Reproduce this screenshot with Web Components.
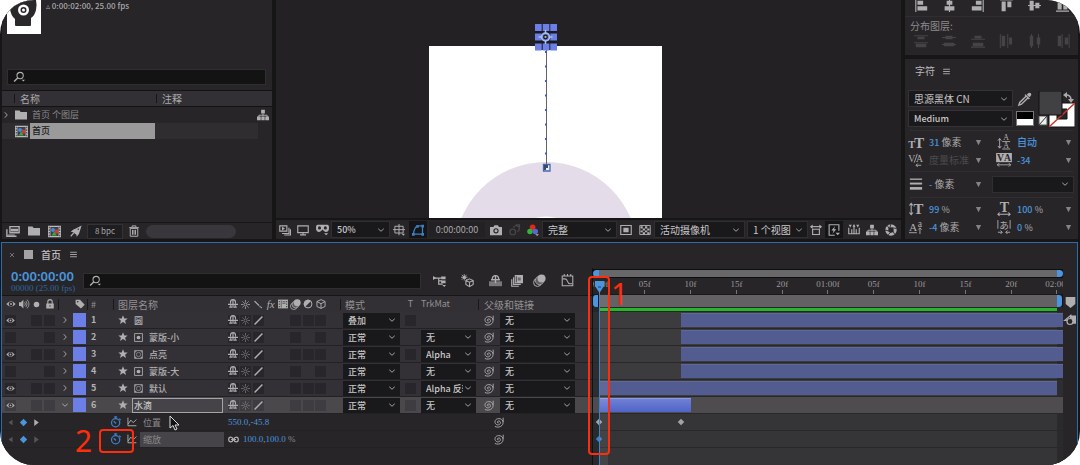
<!DOCTYPE html>
<html lang="zh-CN">
<head>
<meta charset="utf-8">
<title>首页 - 合成</title>
<style>
  html, body { margin: 0; background: #fff; }
  body {
    font-family: "Noto Sans CJK SC", "Noto Sans", sans-serif;
    font-size: 10px; line-height: 16px; color: #a9a8a9;
    --panel: #272528; --field: #19181a; --head: #323034;
    --blue: #4a95dd; --icon: #b0afb0;
  }
</style>
</head>
<body>
<ae-app></ae-app>
<script>
const ICONS = {
  search: '<circle cx="9.5" cy="6" r="4.2" fill="none" stroke="currentColor" stroke-width="1.4"/><path d="M6.5 9 1.5 14" stroke="currentColor" stroke-width="1.8"/><path d="M11.5 11.5h4.500l-2.200 2.600z" fill="currentColor"/>',
  right: '<path d="m5.500 2.500 5 5.500-5 5.500" fill="none" stroke="currentColor" stroke-width="1.8"/>',
  down: '<path d="m2.500 5.500 5.500 5 5.500-5" fill="none" stroke="currentColor" stroke-width="1.8"/>',
  folder: '<path d="M0 2h6l1.500 2H16V14H0z" fill="currentColor"/>',
  comp: '<path d="M0 1h16v14H0z" fill="#bbb"/><path d="M3 2.500h10v11H3z" fill="#38424d"/><path d="M1 2h1v2H1zm0 3.300h1v2H1zm0 3.300h1v2H1zm0 3.300h1v2H1zM14 2h1v2h-1zm0 3.300h1v2h-1zm0 3.300h1v2h-1zm0 3.300h1v2h-1z" fill="#222"/><circle cx="6.200" cy="6.200" r="2.400" fill="#478ad8"/><path d="M8.500 5.500h4v5h-4z" fill="#d23b2e"/><path d="m7.500 8 3.300 5H4.500z" fill="#3fa63e"/>',
  tree: '<path d="M5.500 1h5v5h-5zM0 10h5v5H0zm11 0h5v5h-5zM5.800 10h4.400v5H5.800z" fill="currentColor"/><path d="M8 6v3M2.500 11V8.300h11V11" fill="none" stroke="currentColor" stroke-width="1.300"/>',
  stack: '<path d="M4.500 3H15v7H4.500zM1 6v8h11" fill="none" stroke="currentColor" stroke-width="1.600"/><path d="M5.500 5.500h8.500v3H5.500zM2 12h8v1H2z" fill="currentColor"/>',
  rocket: '<path d="M15.500.500 7 5 4.500 6 1 9l3 .500L8.500 13l.500 2.500 3-4z" fill="currentColor"/><path d="m1 15 4-4.500" stroke="currentColor" stroke-width="1.600"/><circle cx="11" cy="5.500" r="1" fill="#272528"/>',
  trash: '<path d="M3 4.500h10V15H3zM1.500 3.500h13M5.500 3V1.200h5V3M6 6.500v6.500M8 6.500v6.500M10 6.500v6.500" fill="none" stroke="currentColor" stroke-width="1.300"/>',
  menu: '<path d="M2 4h12M2 8h12M2 12h12" stroke="currentColor" stroke-width="1.600"/>',
  close: '<path d="m4 4 8 8m0-8-8 8" stroke="currentColor" stroke-width="1.600"/>',
  eye: '<path d="M.500 8Q8-.500 15.500 8 8 16 .500 8z" fill="currentColor"/><circle cx="8" cy="7.800" r="3.600" fill="#29272a"/><circle cx="8" cy="7.800" r="1.600" fill="currentColor"/>',
  speaker: '<path d="M0 5h3l4-4v14l-4-4H0z" fill="currentColor"/><path d="M9 5q2.500 3 0 6M11 3q4 5 0 10M13 1q6 7 0 14" fill="none" stroke="currentColor" stroke-width="1.200"/>',
  dot: '<circle cx="8" cy="8" r="4" fill="currentColor"/>',
  lock: '<path d="M2 7h12v8H2z" fill="currentColor"/><path d="M4.500 8V4.500a3.500 3.500 0 0 1 7 0V8" fill="none" stroke="currentColor" stroke-width="1.700"/><path d="M7.300 9.500h1.400v3H7.300z" fill="#323034"/>',
  tag: '<path d="M1 1h7l7.500 8-6 6L1 8z" fill="currentColor"/><circle cx="4.300" cy="4.300" r="1.300" fill="#323034"/>',
  star: '<path d="m8 .500 2.100 5h5.400l-4.200 3.500 1.600 5.500L8 11.200 3.100 14.500 4.700 9 .500 5.500h5.400z" fill="currentColor"/>',
  mask: '<path d="M1 1h14v14H1z" fill="none" stroke="currentColor" stroke-width="1.500"/><circle cx="8" cy="8" r="3.300" fill="currentColor"/>',
  matte: '<path d="M1 1h14v14H1z" fill="none" stroke="currentColor" stroke-width="1.300"/><circle cx="8" cy="8" r="3.800" fill="none" stroke="currentColor"/><path d="M2 2h3L2 5zM14 2h-3l3 3zM2 14v-3l3 3zM14 14h-3l3-3z" fill="currentColor"/>',
  shy: '<path d="M4 7V5q0-4 4-4t4 4v2M0 8.500h16M8 2v12M4.500 8.500V13M11.500 8.500V13M2 13h4.500M9.500 13H14" fill="none" stroke="currentColor" stroke-width="1.800"/>',
  sun: '<circle cx="8" cy="8" r="2.600" fill="none" stroke="currentColor" stroke-width="1.400"/><path d="M8 0v4M8 12v4M0 8h4M12 8h4M2.500 2.500l2.500 2.500M11 11l2.500 2.500M13.500 2.500 11 5M5 11l-2.500 2.500" stroke="currentColor" stroke-width="1.300"/>',
  slash: '<path d="M1 15 15 1" stroke="currentColor" stroke-width="2.600"/>',
  back: '<path d="m1 2 8 8" stroke="currentColor" stroke-width="2.200"/><path d="m10 11 4 3.500" stroke="currentColor" stroke-width="2.200" stroke-dasharray="2 1"/>',
  film: '<path d="M0 1h16v14H0z" fill="currentColor"/><path d="M1.200 3h1.600v2H1.200zm0 4h1.600v2H1.200zm0 4h1.600v2H1.200zM13.200 3h1.600v2h-1.600zm0 4h1.600v2h-1.600zm0 4h1.600v2h-1.600zM4.500 2.500h1v11h-1zM7 4h5v1H7zm0 3h5v1H7z" fill="#323034"/>',
  blur: '<circle cx="5.500" cy="10.500" r="4.800" fill="none" stroke="currentColor" stroke-width="1.200"/><circle cx="8" cy="8" r="5" fill="#5d5c5e" stroke="currentColor"/><circle cx="10.500" cy="5.500" r="5" fill="currentColor"/>',
  half: '<circle cx="8" cy="8" r="6.300" fill="none" stroke="currentColor" stroke-width="1.600"/><path d="M12.500 3.500a6.300 6.300 0 0 0-9 9z" fill="currentColor"/>',
  cube: '<path d="m8 1 6.500 3v8L8 15l-6.500-3V4zM1.500 4 8 7.500 14.500 4M8 7.500V15" fill="none" stroke="currentColor" stroke-width="1.500"/>',
  spiral: '<path d="M8.300 8.200c-.800 1.300-2.500.200-1.800-1.300.800-2 4-1.500 4.300.900.400 3.300-3.800 4.800-6.300 2.800C1 7.500 3.500 2.300 8.300 2.300c6 0 8.200 6 4.700 10-2.300 2.600-7 3.200-10.300 1.400M14.800 1v6" fill="none" stroke="currentColor" stroke-width="1.300"/>',
  watch: '<circle cx="7.500" cy="9" r="5.500" fill="none" stroke="currentColor" stroke-width="1.700"/><path d="M5.500 1.200h4M7.500 1v3M12 3.500l2.500 2M5 7l3 3" stroke="currentColor" stroke-width="1.700"/>',
  graph: '<path d="M1.500 1v13H15" fill="none" stroke="currentColor" stroke-width="1.500"/><path d="m2 11 4-6 4 4 5-5" fill="none" stroke="currentColor" stroke-width="1.500"/>',
  link: '<path d="M7.500 8c-1 4.500-6.500 4.500-6.500 0s5.500-4.500 6.500 0m1 0c1-4.500 6.500-4.500 6.500 0s-5.500 4.500-6.500 0M4.500 8h7" fill="none" stroke="currentColor" stroke-width="1.800"/>',
  prev: '<path d="M11.500 3v10L4.500 8z" fill="currentColor"/>',
  next: '<path d="M4 2v12l8-6z" fill="currentColor"/>',
  key: '<path d="m8 1.500 6.500 6.500L8 14.500 1.500 8z" fill="currentColor"/>',
  drop: '<path d="M2 2.500h12L8 14z" fill="currentColor"/>',
  screens: '<path d="M1 2.500h9.500v7H1z" fill="none" stroke="currentColor" stroke-width="1.500"/><path d="m4 3.500 4 2.500-4 2.500zM12.500 5v7H4v1.300h10V5zM14.500 7v7H7v1.300h9V7z" fill="currentColor"/>',
  monitor: '<path d="M1 2.500h14v9H1zM8 12v2.500M4 14.500h8" fill="none" stroke="currentColor" stroke-width="1.500"/>',
  goggles: '<path d="M2 2h12q2 0 2 4 0 5-4 5-2 0-4-3-2 3-4 3-4 0-4-5 0-4 2-4z" fill="currentColor"/><circle cx="4.300" cy="6" r="1.900" fill="#272528"/><circle cx="11.500" cy="6" r="1.900" fill="#272528"/><path d="M10 12.500h5L12.500 15z" fill="currentColor"/>',
  guides: '<path d="M2.500 3h11v9h-11zM8 0v15M0 7.500h16" fill="none" stroke="currentColor" stroke-width="1.300"/><path d="M11.500 13h4.500l-2.200 2.500z" fill="currentColor"/>',
  roi: '<path d="M2 13.500h12V2.500H8Q3 3.500 2 13.500z" fill="none" stroke="currentColor" stroke-width="1.700"/><path d="M0 12h3.500v3.500H0zM12.500 12H16v3.500h-3.500zM12.500 1H16v3.500h-3.500zM5.500 1.500H9V5H5.500z" fill="currentColor"/>',
  camera: '<path d="M0 4h4.500L6 1.500h4.500L12 4h4v11H0z" fill="currentColor"/><circle cx="8" cy="9" r="3.500" fill="#272528"/><circle cx="8" cy="9" r="2" fill="currentColor"/>',
  ghost: '<circle cx="5" cy="10.500" r="3.800" fill="none" stroke="currentColor" stroke-width="1.600"/><path d="M6 5a4 4 0 1 1 5 5M9 1h5v4" fill="none" stroke="currentColor" stroke-width="1.600"/>',
  rgb: '<circle cx="7.500" cy="4.200" r="3.700" fill="#e8271b"/><circle cx="4" cy="10" r="3.700" fill="#2eb53a"/><circle cx="11" cy="10" r="3.700" fill="#5668cf"/><path d="M11 13.500h5l-2.500 2.500z" fill="currentColor"/>',
  inset: '<path d="M1 2h14v12H1z" fill="none" stroke="currentColor" stroke-width="1.500"/><path d="M4.500 5h7v6h-7z" fill="currentColor"/>',
  checker: '<path d="M1 2h14v12H1z" fill="none" stroke="currentColor" stroke-width="1.200"/><path d="M2 3h3v3H2zm6 0h3v3H8zM5 6h3v2.500H5zm6 0h3v2.500h-3zM2 8.500h3V11H2zm6 0h3V11H8zM5 11h3v2.500H5zm6 0h3v2.500h-3z" fill="currentColor"/>',
  aspect: '<path d="M3.500 7h9v7h-9z" fill="none" stroke="currentColor" stroke-width="1.500"/><path d="M1 3.500h14" stroke="currentColor" stroke-width="1.500"/><path d="M3.500.500v6L0 3.500zM12.500.500v6l3.500-3z" fill="currentColor"/>',
  fast: '<path d="M14.500 9V1h-13v14H9" fill="none" stroke="currentColor" stroke-width="1.500"/><path d="M9.500 2.500 4.500 8.500h3L6 13l5-6H8zM10 11.500h6L13 15z" fill="currentColor"/>',
  ruler: '<path d="M1 5v8h14V5M5 13V7M8 13V2M11 13V7" fill="none" stroke="currentColor" stroke-width="1.500"/><path d="M1 1h4L3 4.500zM11 1h4l-2 3.500zM6 3.500h4L8 0z" fill="currentColor"/>',
  shutter: '<circle cx="8" cy="8" r="5.600" fill="none" stroke="currentColor" stroke-width="4"/><path d="m8 0-2 6M15.500 6l-6-1M13 14l-3-5.500M4 14.500l4-4M0 8l6 1.500M3 2l3 5" stroke="#272528" stroke-width="1.200"/>',
  flow: '<path d="M0 5h10M7 5v7.500h5M7 8.500h4" fill="none" stroke="currentColor" stroke-width="1.400"/><path d="M0 2.500 4 5 0 7.500zM10 3h5.500v3.500H10zM10 8h5.500v3.500H10zM11.500 13.500h4.500l-2.200 2.500z" fill="currentColor"/>',
  draft: '<path d="m10.500 6 4.500 2v5l-4.500 2.500L6 13V8zM6 8l4.500 2L15 8M10.500 10v5" fill="none" stroke="currentColor" stroke-width="1.300"/><circle cx="4" cy="4" r="2" fill="currentColor"/><path d="M4 0v8M0 4h8M1 1l6 6M7 1 1 7" stroke="currentColor"/>',
  hide: '<path d="M4 7q0-5 4-5t4 5M2.500 7h11M8 2v9" fill="none" stroke="currentColor" stroke-width="1.700"/><path d="M0 9h16v6H0z" fill="currentColor" opacity=".6"/>',
  blend: '<path d="M5 0h11v11H5z" fill="currentColor"/><path d="M3.500 3v9.500H13M1 5.500V15h9.500" fill="none" stroke="currentColor" stroke-width="1.600"/><path d="M6.500 1.500h1v8h-1zM9 3.500h4v1H9zM9 6h4v1H9z" fill="#272528"/>',
  curve: '<path d="M1.500 2.500h13v12h-13zM4 0v3M8 0v3M12 0v3" fill="none" stroke="currentColor" stroke-width="1.300"/><path d="M2 6h3q2 0 3 3t3 3h3" fill="none" stroke="currentColor" stroke-width="1.300"/>',
  dropper: '<path d="m10 3 1.500-1.500q2-1.500 3.200 0t-.200 3L13 6z" fill="currentColor"/><path d="m8 3 5 5M9.500 4.500 2 12l-1 3 3-1 7.500-7.500" fill="none" stroke="currentColor" stroke-width="1.600"/>',
  strokes: '<path d="M1 2.500h14" stroke="currentColor" stroke-width="1.500"/><path d="M1 7.500h14" stroke="currentColor" stroke-width="2.200"/><path d="M1 13h14" stroke="currentColor" stroke-width="3"/>',
  size: '<text x="-1" y="15" font-size="12" font-weight="700">T</text><text x="6" y="15" font-size="17" font-weight="700">T</text>',
  leading: '<text x="7" y="6" font-size="9">A</text><text x="7" y="15" font-size="9">A</text><path d="M6 7.500h9M6 16h9M3 4v11M1 6.500l2-2.500 2 2.500M1 12.500l2 2.500 2-2.500" fill="none" stroke="currentColor"/>',
  kern: '<text x="-1" y="10" font-size="11">V</text><text x="8" y="10" font-size="11">A</text><path d="M9.500 1 6 11M8 14h6M10 12l-2 2 2 2" fill="none" stroke="currentColor"/>',
  track: '<path d="M-1 0h18v10.500H-1z" fill="currentColor"/><text x="0" y="9" font-size="11" font-weight="700" style="fill:#272528">V</text><text x="8" y="9" font-size="11" font-weight="700" style="fill:#272528">A</text><path d="M0 13.500h16M2.500 11.500l-2 2 2 2M13.500 11.500l2 2-2 2" fill="none" stroke="currentColor"/>',
  vscale: '<text x="5" y="14" font-size="17" font-weight="700">T</text><path d="M2.500 2v12M.500 4l2-2.500 2 2.500M.500 12l2 2.500 2-2.500" fill="none" stroke="currentColor" stroke-width="1.200"/>',
  hscale: '<text x="3" y="11.500" font-size="16" font-weight="700">T</text><path d="M1 14h14M3 12l-2 2 2 2M13 12l2 2-2 2" fill="none" stroke="currentColor" stroke-width="1.200"/>',
  shift: '<text x="0" y="12" font-size="13">A</text><text x="10" y="8" font-size="11">a</text><path d="M0 14.500h9M12.500 9v7M10.500 11l2-2 2 2" fill="none" stroke="currentColor"/>',
  tsume: '<text x="2.500" y="10" font-size="11" style="font-family:Noto Sans CJK JP">あ</text><path d="M1 0v10M15 0v10M1 14h5M4 12l2 2-2 2M15 14h-5M12 12l-2 2 2 2" fill="none" stroke="currentColor"/>',
  alL: '<path d="M1 0v16" stroke="currentColor" stroke-width="1.400"/><path d="M3 2h7v5H3zM3 9h12v5H3z" fill="currentColor"/>',
  alC: '<path d="M8 0v16" stroke="currentColor" stroke-width="1.400"/><path d="M4.500 2h7v5h-7zM2 9h12v5H2z" fill="currentColor"/>',
  alR: '<path d="M15 0v16" stroke="currentColor" stroke-width="1.400"/><path d="M6 2h7v5H6zM1 9h12v5H1z" fill="currentColor"/>',
  alT: '<path d="M0 1h16" stroke="currentColor" stroke-width="1.400"/><path d="M2 3h5v12H2zM9 3h5v7H9z" fill="currentColor"/>',
  alM: '<path d="M0 8h16" stroke="currentColor" stroke-width="1.400"/><path d="M2 2h5v12H2zM9 4.500h5v7H9z" fill="currentColor"/>',
  alB: '<path d="M0 15h16" stroke="currentColor" stroke-width="1.400"/><path d="M2 1h5v12H2zM9 6h5v7H9z" fill="currentColor"/>',
  diT: '<path d="M0 2h16M0 10h16" stroke="currentColor" stroke-width="1.200"/><path d="M4 3h8v3H4zM2 11h12v4H2z" fill="currentColor"/>',
  diC: '<path d="M0 4h16M0 12h16" stroke="currentColor" stroke-width="1.200"/><path d="M4 2h8v4H4zM2 10h12v4H2z" fill="currentColor"/>',
  diB: '<path d="M0 6h16M0 15h16" stroke="currentColor" stroke-width="1.200"/><path d="M4 2h8v3H4zM2 10h12v4H2z" fill="currentColor"/>',
  diL: '<path d="M1.500 0v16M10 0v16" stroke="currentColor" stroke-width="1.200"/><path d="M3 2h4v12H3zM11.500 4h3.500v8h-3.500z" fill="currentColor"/>',
  diM: '<path d="M4 0v16M12 0v16" stroke="currentColor" stroke-width="1.200"/><path d="M2 2h4v12H2zM10 4h4v8h-4z" fill="currentColor"/>',
  diR: '<path d="M7 0v16M15 0v16" stroke="currentColor" stroke-width="1.200"/><path d="M2 2h4v12H2zM10 4h4v8h-4z" fill="currentColor"/>',
  marker: '<path d="M1 0h14v10l-7 6-7-6z" fill="currentColor"/>',
  bin: '<path d="M8 2h8v11H8z" fill="currentColor"/><path d="M10 1 1 8.500h5" fill="none" stroke="currentColor" stroke-width="1.600"/><circle cx="8" cy="10" r="4" fill="#272528" stroke="currentColor" stroke-width="1.600"/>'
};

const define = (name, css, html) => customElements.define(name, class extends HTMLElement {
  connectedCallback() {
    if (this.shadowRoot) return;
    const root = this.attachShadow({ mode: 'open' });
    root.innerHTML = `<style>*{box-sizing:border-box}button{font:inherit;color:inherit;background:none;border:0;padding:0;margin:0;display:grid;place-items:center}${css}</style>` +
      (typeof html === 'function' ? html(this) : html);
  }
});
const ic = (n, s = 12, c = '') => `<ae-icon name="${n}" style="--s:${s}px${c ? ';color:' + c : ''}"></ae-icon>`;
const btn = (n, label, s = 12, cls = '', c = '') => `<button class="${cls}" aria-label="${label}">${ic(n, s, c)}</button>`;

define('ae-icon', `
  :host { display: inline-grid; width: var(--s); height: var(--s); flex: none; color: var(--icon); }
  svg { width: 100%; height: 100%; overflow: visible; display: block; }
  text { font-family: "Liberation Serif", serif; fill: currentColor; }`,
  el => `<svg viewBox="0 0 16 16" aria-hidden="true" style="color:${el.style.color || 'var(--icon)'}">${ICONS[el.getAttribute('name')]}</svg>`);

define('ae-select', `
  :host { display: grid; height: 15px; background: var(--field); color: #c8c7c8; min-width: 0; }
  select { grid-area: 1/1; appearance: none; border: 0; background: none; color: inherit; font: inherit; line-height: 15px;
    height: 15px; width: 100%; min-width: 0; padding: 0 13px 0 5px; margin: 0; outline: 0; }
  ae-icon { grid-area: 1/1; place-self: center end; margin-right: 4px; pointer-events: none; }`,
  el => `<select aria-label="${el.getAttribute('label')}"><option>${el.getAttribute('value')}</option></select>${ic('down', 8)}`);

define('ae-search', `
  :host { display: grid; height: 16px; background: #141314; border: 1px solid #302e31; }
  input { grid-area: 1/1; border: 0; background: none; color: #bbb; font: inherit; height: 14px; width: 100%; min-width: 0; padding: 0 4px 0 22px; outline: 0; }
  ae-icon { grid-area: 1/1; place-self: center start; margin-left: 5px; }`,
  el => `<input type="text" aria-label="${el.getAttribute('label')}">${ic('search', 12)}`);

/* Project panel */
define('ae-project', `
  :host { display: flex; flex-direction: column; background: var(--panel); min-width: 0; }
  .info { display: flex; gap: 5px; padding-left: 5px; height: 69px; font-size: 8px; line-height: 12px; font-weight: 500; }
  .thumb { width: 34px; height: 34px; background: #fff; display: block; }
  ae-search { margin: 0 6px 0 5px; }
  .cols { display: grid; grid-template-columns: 12px 142px 1fr; height: 17px; margin-top: 5px; background: var(--head); border-block: 1px solid #141314; line-height: 15px; }
  .cols span + span { border-left: 1px solid #171617; margin-block: 3px; line-height: 9px; padding-left: 5px; }
  .item { display: grid; grid-template-columns: 13px 15px 125px 1fr 15px; align-items: center; height: 16px; font-size: 9px; color: #8b8a8c; }
  .item b { font-weight: 400; line-height: 16px; padding-left: 2px; white-space: nowrap; }
  .sel { background: #2f2d30; margin-right: 14px; grid-template-columns: 13px 15px 125px 1fr; }
  .sel b { background: #9b9a9b; color: #202020; align-self: stretch; font-weight: 500; }
  .tools { margin-top: auto; height: 17px; border-top: 1px solid #171617; display: flex; align-items: center; }
  .tools button { width: 21px; height: 15px; }
  .tools .bpc { width: 36px; background: #1e1d1f; border: 1px solid #343236; font-size: 8px; line-height: 12px; margin-left: 1px; }
  .thumbbar { width: 90px; height: 13px; border-radius: 7px; background: #39373b; margin-left: 2px; }`, `
  <div class="info"><svg class="thumb" viewBox="0 0 34 34" aria-hidden="true"><path d="M3 9Q5 3 9 0H29Q30 4 29 10 28 15 24 18V25Q24 26 23 26H9Q8 26 8 25V19Q4 16 3 9z" fill="#2a282b"/><circle cx="16.500" cy="10" r="5.500" fill="#fff"/><circle cx="16.500" cy="10" r="3" fill="#2a282b"/><circle cx="16.500" cy="10" r="1.500" fill="#fff"/></svg><span>▵ 0:00:02:00, 25.00 fps</span></div>
  <ae-search label="搜索项目"></ae-search>
  <div class="cols"><span></span><span>名称</span><span>注释</span></div>
  <div class="item">${ic('right', 8)}${ic('folder', 12)}<b>首页 个图层</b><i></i>${ic('tree', 12)}</div>
  <div class="item sel"><i></i>${ic('comp', 13)}<b>首页</b></div>
  <div class="tools">${btn('stack', '解释素材', 14)}${btn('folder', '新建文件夹', 12)}${btn('comp', '新建合成', 13)}${btn('rocket', '项目设置', 12)}<button class="bpc">8 bpc</button>${btn('trash', '删除', 12)}<div class="thumbbar"></div></div>`);

/* Composition viewer */
define('ae-viewer', `
  :host { display: flex; flex-direction: column; background: #232124; min-width: 0; }
  .stage { flex: 1; min-height: 0; display: grid; overflow: hidden; }
  .stage svg { width: 100%; height: 218px; display: block; }
  .bar { display: flex; align-items: center; height: 21px; background: var(--panel); border-top: 2px solid #171617; font-size: 10px; }
  .bar button { width: 18px; height: 17px; flex: none; }
  .bar .w { width: 20px; }
  .bar .on { background: #151416; margin-right: 2px; }
  ae-select { flex: none; height: 15px; outline: 1px solid #302e31; }
  .tc { width: 57px; text-align: center; font-size: 9px; line-height: 15px; background: #232124; margin-right: 1px; }
  .a { width: 57px; font-size: 9px; font-weight: 500; } .b { width: 73px; margin-left: 1px; } .c { width: 89px; margin: 0 4px 0 1px; } .d { width: 59px; }`, `
  <div class="stage"><svg viewBox="0 0 625 218" preserveAspectRatio="xMidYMin slice" aria-label="合成画面">
    <path d="M153 46h233v172H153z" fill="#fff"/><circle cx="270" cy="254" r="92" fill="#e4dce8"/><circle cx="270" cy="254" r="37.500" fill="#fff"/>
    <path d="M270.500 50v115" stroke="#66606f"/><path d="M270 51v115" stroke="#3d5bc0" stroke-width="2" stroke-dasharray="2 12.500"/>
    <path d="M259 24h22v26h-22z" fill="#1b1a20"/>
    <path d="M259 24h6.700v7H259zm7.700 0h6.700v7h-6.700zm7.600 0h6.700v7h-6.700zM259 33.500h6.700v7H259zm7.700 0h6.700v7h-6.700zm7.600 0h6.700v7h-6.700zM259 43.500h6.700v7H259zm7.700 0h6.700v7h-6.700zm7.600 0h6.700v7h-6.700z" fill="#6c7fe6"/>
    <circle cx="269.500" cy="37" r="4" fill="#6c7fe6" stroke="#a9c0ee" stroke-width="1.500"/><path d="M269.500 30v3.500M269.500 40.500V44M262.500 37h3.500M273 37h3.500" stroke="#a9c0ee" stroke-width="1.500"/><circle cx="269.500" cy="37" r="1.800" fill="#aaa" stroke="#17161a" stroke-width="1.300"/>
    <path d="M267.500 164.500h6.500v6.500h-6.500z" fill="#e9edf8" stroke="#4467b5" stroke-width="1.300"/><path d="M268 165h4v3h-2v2h-2z" fill="#3c4c66"/>
  </svg></div>
  <div class="bar">${btn('screens', '始终预览')}${btn('monitor', '主查看器')}${btn('goggles', '3D 眼镜', 13, 'w')}<ae-select class="a" label="放大率" value="50%"></ae-select>${btn('guides', '网格和参考线', 12, 'w')}${btn('roi', '蒙版可见性', 12, 'on', '#3f7fc4')}<span class="tc">0:00:00:00</span>${btn('camera', '拍摄快照', 12, 'w')}${btn('ghost', '显示快照', 12, '', '#48464a')}${btn('rgb', '显示通道')}<ae-select class="b" label="分辨率" value="完整"></ae-select>${btn('inset', '目标区域', 12, 'w')}${btn('checker', '透明网格')}<ae-select class="c" label="3D 视图" value="活动摄像机"></ae-select><ae-select class="d" label="视图布局" value="1 个视图"></ae-select>${btn('aspect', '像素长宽比')}${btn('fast', '快速预览', 12, 'on')}${btn('ruler', '时间轴')}${btn('tree', '合成流程图', 12)}${btn('shutter', '重置曝光度', 12, 'w')}</div>`);

/* Align + character panels */
define('ae-metric', `
  :host { display: grid; grid-template-columns: 20px 46px 22px 20px 48px 8px; align-items: center; height: 18px; }
  span { white-space: nowrap; line-height: 16px; } em { font-style: normal; color: var(--blue); font-size: 9px; font-weight: 500; }
  em.cjk { font-size: 10px; } .dim { color: #4c4a4d; } small { font-size: 9px; }
  ae-select { grid-column: 4 / 7; margin-left: -4px; outline: 1px solid #302e31; }
  i { display: grid; }`,
  el => {
    const cell = k => { const v = el.getAttribute(k); return v ? `<span>${v}</span>` : ''; };
    return `${ic(el.getAttribute('icon1'), 14)}${cell('v1')}<i>${ic('drop', 7, '#848385')}</i>` +
      (el.hasAttribute('icon2') ? `${ic(el.getAttribute('icon2'), 14)}${cell('v2')}${ic('drop', 7, '#848385')}` : '<ae-select label="描边方式" value=""></ae-select>');
  });
define('ae-character', `
  :host { display: block; background: var(--panel); min-width: 0; }
  .al { display: flex; justify-content: space-between; padding: 0 8px 0 9px; height: 17px; border-bottom: 1px solid #302e31; align-items: flex-start; overflow: hidden; }
  .al button { width: 14px; height: 14px; margin-top: -2px; }
  .lab { line-height: 17px; padding-left: 5px; color: #8b8a8c; }
  .dis { border: 0; height: 21px; } .dis button { margin-top: 0; }
  .tab { border-top: 4px solid #171617; height: 28px; padding-left: 10px; display: flex; gap: 7px; align-items: center; color: #bab9ba; line-height: 14px; }
  .font { display: grid; grid-template-columns: 103px 20px 1fr; gap: 0 3px; padding: 0 3px 0 4px; height: 39px; align-items: start; margin-top: 8px; }
  .stack { display: grid; gap: 5px; justify-items: stretch; }
  .stack button { justify-self: center; height: 15px; }
  ae-select { outline: 1px solid #343236; } .m { font-size: 9px; font-weight: 500; }
  .stack .bw { width: 18px; border: 1px solid #777; background: linear-gradient(#000 55%, #fff 55%); }
  .sw { width: 37px; height: 37px; display: block; }
  hr { border: 0; border-top: 1px solid #302e31; margin: 0 5px; }
  .g { padding: 2px 4px; }
  .g.s { padding-block: 3px 4px; }`, `
  <div class="al">${['alL', 'alC', 'alR', 'alT', 'alM', 'alB'].map(n => btn(n, '对齐', 13)).join('')}</div>
  <div class="lab">分布图层:</div>
  <div class="al dis">${['diT', 'diC', 'diB', 'diL', 'diM', 'diR'].map(n => btn(n, '分布', 14, '', '#454346')).join('')}</div>
  <div class="tab">字符 ${ic('menu', 9)}</div>
  <div class="font"><div class="stack"><ae-select label="字体" value="思源黑体 CN"></ae-select><ae-select class="m" label="字体样式" value="Medium"></ae-select></div>
    <div class="stack">${btn('dropper', '吸管', 14)}<button class="bw" aria-label="黑白"></button></div>
    <svg class="sw" viewBox="0 0 37 37" aria-hidden="true"><path d="M11 12h26v24H11z" fill="#fff" stroke="#111"/><path d="M19 18h10v10H19z" fill="#272528" stroke="#111"/><path d="m11 36 26-24" stroke="#c8372d" stroke-width="1.500"/><path d="M1 25h8v9H1z" fill="#eee" stroke="#555"/><path d="m1 34 8-9" stroke="#333"/><path d="M1 0h23v24H1z" fill="#414042" stroke="#111"/><path d="M28 4q5 0 5 5" fill="none" stroke="#aaa" stroke-width="1.500"/><path d="m25 4 4-3v6zM30 8h6l-3 4z" fill="#aaa"/></svg></div>
  <hr><div class="g"><ae-metric icon1="size" v1="<em>31</em> 像素" icon2="leading" v2="<em class=cjk>自动</em>"></ae-metric>
  <ae-metric icon1="kern" v1="<span class=dim>度量标准</span>" icon2="track" v2="<em>-34</em>"></ae-metric></div>
  <hr><div class="g s"><ae-metric icon1="strokes" v1="<em>-</em> 像素"></ae-metric></div>
  <hr><div class="g"><ae-metric icon1="vscale" v1="<em>99</em> <small>%</small>" icon2="hscale" v2="<em>100</em> <small>%</small>"></ae-metric>
  <ae-metric icon1="shift" v1="<em>-4</em> 像素" icon2="tsume" v2="<em>0</em> <small>%</small>"></ae-metric></div>`);

/* Timeline: all rows of the outline share one set of columns */
const COLS = `grid-template-columns: repeat(4, 13px) 17px 13px 29px 16px 96px 100px 16px 57px 21px 55px 24px 75px 1fr; padding-left: 2px; align-items: center; height: 17px;`;
define('ae-layer-head', `
  :host { display: grid; ${COLS} background: var(--head); color: #929193; border-top: 1px solid #171617; }
  span { white-space: nowrap; } .c, ae-icon { justify-self: center; }
  .sw { display: grid; grid-template-columns: repeat(8, 1fr); justify-items: center; align-items: center; }
  .n { border-left: 1px solid #19181a; line-height: 11px; padding-left: 4px; grid-column: span 2; margin-left: -2px; }
  .h { margin-left: 1px; border-left: 1px solid #19181a; line-height: 11px; padding-left: 3px; font-size: 9px; }
  .v { border-left: 1px solid #19181a; height: 11px; margin-left: 2px; }
  .fx { font: italic 11px/14px "Liberation Serif", serif; color: var(--icon); } .m { margin-left: -3px; border-left: 1px solid #19181a; line-height: 11px; padding-left: 4px; } .t { font-size: 9px; }
  .p { grid-column: span 2; border-left: 1px solid #19181a; line-height: 11px; padding-left: 5px; margin-left: 2px; }`, `
  ${ic('eye', 10)}${ic('speaker', 10)}${ic('dot', 11)}${ic('lock', 10)}<i class="v"></i>${ic('tag', 10)}<span class="h">#</span><span class="n">图层名称</span>
  <div class="sw">${ic('shy', 10)}${ic('sun', 9)}${ic('back', 9)}<span class="fx">fx</span>${ic('film', 10)}${ic('blur', 11)}${ic('half', 10)}${ic('cube', 10)}</div><i></i>
  <span class="m">模式</span><span class="c t">T</span><span class="t">TrkMat</span><span class="p">父级和链接</span>`);

define('ae-layer', `
  :host { display: grid; ${COLS} background: #333135; border-bottom: 1px solid #222123; color: #b1b0b2; font-size: 9px; --cell: #28262a; }
  :host([selected]) { background: #4a484b; --cell: #3e3c40; }
  .cell { width: 11px; height: 11px; background: var(--cell); display: grid; place-items: center; justify-self: center; padding: 0; }
  .off { background: none; } .chip { width: 13px; height: 14px; background: #6c7fe6; }
  ae-icon { justify-self: center; } .num { padding-left: 5px; font-weight: 700; }
  .name { display: flex; gap: 6px; align-items: center; padding-left: 3px; line-height: 15px; font-weight: 500; white-space: nowrap; }
  input { font: inherit; color: #c6c5c6; background: #454347; border: 1px solid #a5a4a6; height: 15px; width: 91px; padding: 0 1px; margin-left: -2px; outline: 0; }
  .sw { display: grid; grid-template-columns: repeat(8, 1fr); justify-items: center; align-items: center; }
  ae-select { height: 15px; font-weight: 500; } button.c { justify-self: center; }`,
  el => {
    const a = n => el.getAttribute(n), cell = (on, i = '', l = '') => `<button class="cell ${on ? '' : 'off'}" aria-label="${l}">${i}</button>`;
    const vis = el.hasAttribute('visible'), sel = el.hasAttribute('selected');
    return cell(1, vis ? ic('eye', 9) : '', '视频') + cell(0, '', '音频') + cell(vis, '', '独奏') + cell(1, '', '锁定') +
      ic(sel ? 'down' : 'right', 8) + `<span class="chip"></span><span class="num">${a('num')}</span>` + ic('star', 10) +
      (sel ? `<div class="name"><input type="text" aria-label="图层名称" value="${a('name')}"></div>`
           : `<div class="name">${a('icon') ? ic(a('icon'), 9) : ''}<span>${a('name')}</span></div>`) +
      `<div class="sw">${cell(1, ic('shy', 10), '消隐')}${cell(1, ic('sun', 9, '#7e7d80'), '折叠')}${cell(1, ic('slash', 9), '质量')}<i></i><i></i>${cell(1, '', '运动模糊')}${cell(vis, '', '调整图层')}${cell(1, '', '3D 图层')}</div><i></i>` +
      `<ae-select label="模式" value="${a('mode')}"></ae-select>${cell(vis, '', '保留透明度')}` +
      (a('matte') ? `<ae-select label="轨道遮罩" value="${a('matte')}"></ae-select>` : '<i></i>') +
      `<button class="c" aria-label="父级关联器">${ic('spiral', 11)}</button><ae-select label="父级" value="无"></ae-select>`;
  });

define('ae-property', `
  :host { display: grid; grid-template-columns: repeat(3, 13px) 65px 15px 17px 84px 1fr 24px 82px; padding-left: 2px; align-items: center; height: 17px;
    border-bottom: 1px solid #222123; font-size: 9px; color: #8b8a8c; }
  button { justify-self: center; } .lbl { line-height: 15px; padding-left: 3px; }
  :host([selected]) .lbl { background: #464448; }
  .val { font: 9px/16px "Liberation Serif", serif; display: flex; gap: 4px; align-items: center; padding-left: 4px; }
  ::slotted(em) { font-style: normal; color: var(--blue); } .watch { grid-column: 5; }`,
  el => `${btn('prev', '上一个关键帧', 9, '', '#555457')}${btn('key', '关键帧', 9, '', '#4a95dd')}${btn('next', '下一个关键帧', 9, '', el.hasAttribute('selected') ? '#555457' : '#b0afb0')}${btn('watch', '时间变化秒表', 12, 'watch', '#3f7fc4')}${btn('graph', '图表', 10)}<span class="lbl">${el.getAttribute('name')}</span><span class="val">${el.hasAttribute('linked') ? ic('link', 11) : ''}<span><slot></slot></span></span>${btn('spiral', '表达式关联器', 11)}`);

/* Time graph: the ruler and every bar are placed in percent of the two seconds shown */
define('ae-tracks', `
  :host { display: flex; flex-direction: column; position: relative; min-width: 0; overflow: hidden; border-left: 1px solid #111; color: #9b9a9b; }
  .nav { height: 9px; margin-top: 1px; display: flex; border-block: 1px solid #0e0e0e; background: #0e0e0e; }
  .nav i { flex: 1; background: #686769; } .nav b, .work b { background: #4a95dd; width: 6px; }
  .nav b:first-child { border-radius: 5px 0 0 5px; } .nav b:last-child { border-radius: 0 5px 5px 0; }
  .ruler { height: 16px; display: flex; justify-content: space-between; padding: 0 6px; font: 9px/12px "Liberation Serif", serif; }
  .ruler span { width: 0; display: flex; flex-direction: column; align-items: center; white-space: nowrap; }
  .ruler span::after { content: ""; width: 1px; height: 4px; background: #777; flex: none; }
  .work { height: 13px; display: flex; background: #171617; border-top: 1px solid #19181a; }
  .work i { flex: 1; background: #636164; } .work b { width: 5px; border-radius: 3px 0 0 3px; } .work b:first-child { margin-right: 1px; } .work b:last-child { border-radius: 0 3px 3px 0; margin-right: 1px; }
  .cache { height: 3px; margin: 1px 6px; background: #25b62a; flex: none; }
  .row { height: 17px; flex: none; padding: 0 6px; border-bottom: 1px solid #28272a; overflow: hidden; background: linear-gradient(90deg, #2e2d30 6px, #3c3b3d 6px calc(100% - 6px), #2e2d30 calc(100% - 6px)); }
  .row.p { overflow: visible; background: linear-gradient(90deg, #2a292b 6px, #353436 6px calc(100% - 6px), #2a292b calc(100% - 6px)); }
  .row.s { background: #4e4c4f; }
  .row.rest { flex: 1; height: auto; border: 0; }
  .bar { display: block; height: 14px; margin-top: 1px; background: #535c90; border-top: 1px solid #606896; }
  .late { margin: 1px -6px 0 18%; } .hot { width: 20%; background: linear-gradient(#7080d6, #5064c8); border-top-color: #8d99dd; }
  .keys { display: grid; grid-template-columns: 18% 1fr; align-items: center; height: 16px; }
  .keys ae-icon { margin-left: -4px; }
  .now { position: absolute; left: 6px; top: 26px; bottom: 0; width: 2%; border-left: 1px solid #3f83c8; background: rgba(255,255,255,.08); }
  .head { position: absolute; left: 1px; top: 13px; width: 11px; height: 12px; }`, `
  <div class="nav"><b></b><i></i><b></b></div>
  <div class="ruler">${['0:00f', '05f', '10f', '15f', '20f', '01:00f', '05f', '10f', '15f', '20f', '02:00f'].map(t => `<span>${t}</span>`).join('')}</div>
  <div class="work"><b></b><i></i><b></b></div><div class="cache"></div>
  ${'<div class="row"><i class="bar late"></i></div>'.repeat(4)}
  <div class="row"><i class="bar"></i></div>
  <div class="row s"><i class="bar hot"></i></div>
  <div class="row p"><div class="keys">${ic('key', 8, '#a3a2a4')}${ic('key', 8, '#a3a2a4')}</div></div>
  <div class="row p"><div class="keys">${ic('key', 8, '#3d7fc4')}</div></div>
  <div class="row p rest"></div>
  <div class="now"></div><svg class="head" viewBox="0 0 11 12" aria-hidden="true"><path d="M1 0h9v5l-4.500 7L1 5z" fill="#4a95dd"/><path d="M4 6h3" stroke="#17406e"/></svg>`);

define('ae-timeline', `
  :host { display: flex; flex-direction: column; background: var(--panel); border: 1px solid #2c6cab; border-bottom: 0; min-width: 0; }
  .tab { height: 23px; display: flex; align-items: center; gap: 8px; padding-left: 5px; color: #c0bfc0; }
  .tab i { width: 9px; height: 9px; background: #a3a2a4; } .tab button { width: 9px; } .tab span { font-weight: 500; }
  .body { flex: 1; display: grid; grid-template-columns: 590px 1fr 14px; min-height: 0; }
  .left { display: flex; flex-direction: column; min-width: 0; }
  .info { display: flex; height: 29px; align-items: center; padding-left: 9px; }
  .time { width: 72px; flex: none; color: var(--blue); font: 600 13px/14px "Noto Sans", sans-serif; }
  .time small { display: block; font: 9px/10px "Liberation Serif", serif; color: #2f659e; white-space: nowrap; }
  ae-search { width: 338px; flex: none; margin: 1px 8px 0 0; }
  .info button { width: 20px; height: 16px; margin-right: 2px; flex: none; } .info .gap { margin-right: 8px; }
  ae-tracks { margin-top: 2px; }
  .side { display: grid; align-content: start; justify-items: center; gap: 6px; padding-top: 31px; }`, `
  <div class="tab"><button aria-label="关闭">${ic('close', 8, '#858486')}</button><i></i><span>首页</span>${ic('menu', 9)}</div>
  <div class="body">
    <div class="left">
      <div class="info"><div class="time">0:00:00:00<small>00000 (25.00 fps)</small></div><ae-search label="搜索图层"></ae-search>
      ${btn('flow', '合成微型流程图', 13, 'gap')}${btn('draft', '草图 3D', 13, 'gap')}${btn('hide', '消隐', 13)}${btn('blend', '帧混合', 12)}${btn('blur', '运动模糊', 13, 'gap')}${btn('curve', '图表编辑器', 13)}</div>
      <ae-layer-head></ae-layer-head>
      <ae-layer num="1" name="圆" visible mode="叠加"></ae-layer>
      <ae-layer num="2" name="蒙版-小" icon="mask" mode="正常" matte="无"></ae-layer>
      <ae-layer num="3" name="点亮" icon="matte" visible mode="正常" matte="Alpha"></ae-layer>
      <ae-layer num="4" name="蒙版-大" icon="mask" mode="正常" matte="无"></ae-layer>
      <ae-layer num="5" name="默认" icon="matte" visible mode="正常" matte="Alpha 反转"></ae-layer>
      <ae-layer num="6" name="水滴" visible selected mode="正常" matte="无"></ae-layer>
      <ae-property name="位置"><em>550.0</em>,<em>-45.8</em></ae-property>
      <ae-property name="缩放" selected linked><em>100.0</em>,<em>100.0</em> %</ae-property>
    </div>
    <ae-tracks></ae-tracks>
    <div class="side">${ic('marker', 11)}${ic('bin', 12)}</div>
  </div>`);

/* Hand-drawn callouts that lie over the window */
define('ae-callout', `
  :host { position: absolute; border: 2px solid #ff2d0c; border-radius: 4px; box-sizing: border-box; pointer-events: none;
    font: 30px/30px "Noto Sans", sans-serif; color: #ff2d0c; }
  span { position: absolute; top: var(--ty); left: var(--tx); }`, '<span><slot></slot></span>');

define('ae-app', `
  :host { display: flex; flex-direction: column; min-height: 100vh; background: #171617; border-radius: 34px; overflow: hidden; position: relative; box-sizing: border-box; padding: 0 2px 0 1px; }
  .top { display: grid; grid-template-columns: 270px 1fr 173px; gap: 4px; padding-left: 1px; }
  ae-timeline { flex: 1; margin-top: 3px; }
  .one { left: 588px; top: 276px; width: 22px; height: 179px; --tx: 21px; --ty: 1px; }
  .two { left: 99px; top: 429px; width: 35px; height: 24px; --tx: -26px; --ty: -5px; }
  .cursor { position: absolute; left: 169px; top: 415px; width: 11px; height: 16px; }`, `
  <div class="top"><ae-project></ae-project><ae-viewer></ae-viewer><ae-character></ae-character></div>
  <ae-timeline></ae-timeline>
  <svg class="cursor" viewBox="0 0 11 16" aria-hidden="true"><path d="M1 1v12l3-2.500L6 15l2-1-2-4h4z" fill="#111" stroke="#ddd"/></svg>
  <ae-callout class="one">1</ae-callout><ae-callout class="two">2</ae-callout>`);
</script>
</body>
</html>
